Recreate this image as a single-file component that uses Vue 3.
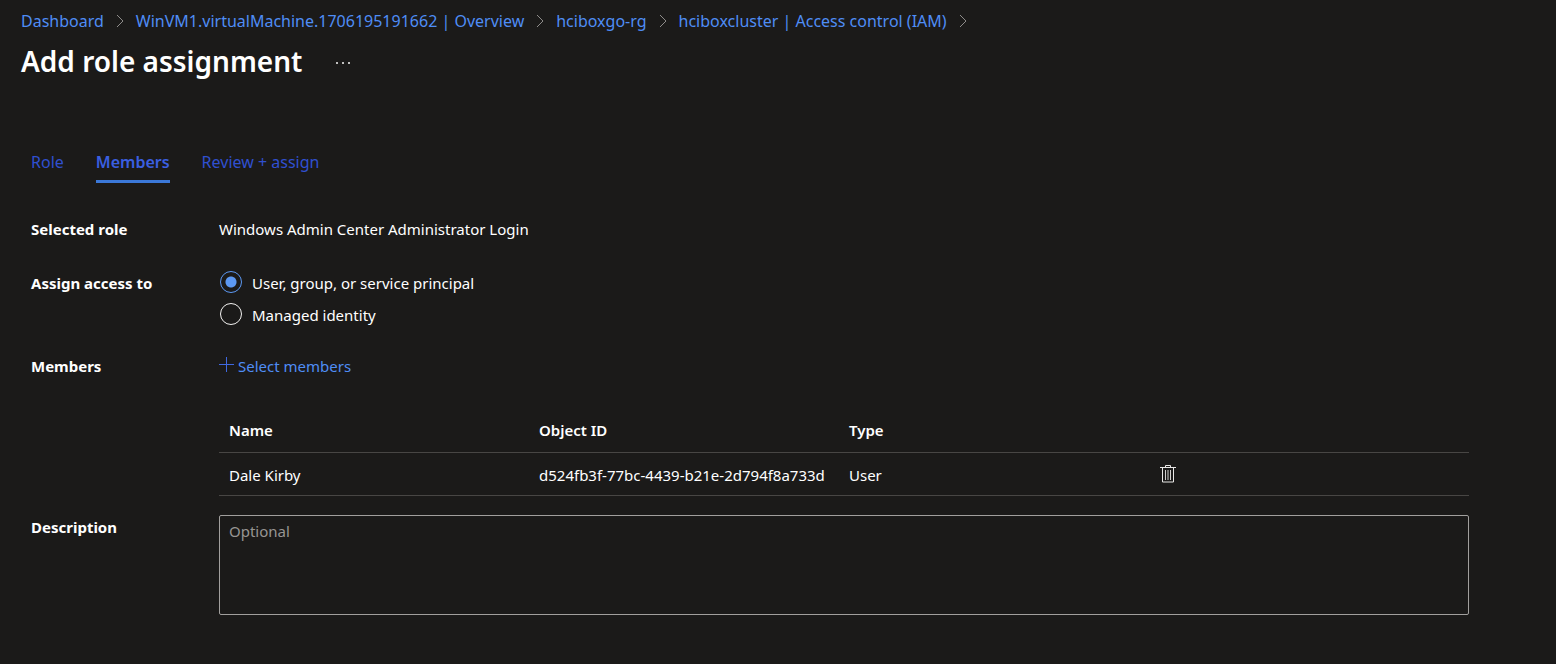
<script setup>
import { ref } from 'vue'

const crumbs = [
  'Dashboard',
  'WinVM1.virtualMachine.1706195191662 | Overview',
  'hciboxgo-rg',
  'hciboxcluster | Access control (IAM)',
]
const tabs = ['Role', 'Members', 'Review + assign']
const activeTab = ref('Members')
const accessOptions = [
  { value: 'principal', label: 'User, group, or service principal' },
  { value: 'managed', label: 'Managed identity' },
]
const access = ref('principal')
const members = ref([
  { name: 'Dale Kirby', id: 'd524fb3f-77bc-4439-b21e-2d794f8a733d', type: 'User' },
])
const description = ref('')

function removeMember(id) {
  members.value = members.value.filter((m) => m.id !== id)
}
</script>

<template>
  <div class="page">
    <nav class="crumbs" aria-label="Breadcrumb">
      <template v-for="crumb in crumbs" :key="crumb">
        <a href="#" class="crumb">{{ crumb }}</a>
        <svg class="chevron" viewBox="0 0 8 14" aria-hidden="true">
          <path d="M1 1l6 6-6 6" />
        </svg>
      </template>
    </nav>

    <header class="heading">
      <h1>Add role assignment</h1>
      <button type="button" class="more" aria-label="More actions">
        <svg viewBox="0 0 14 2" aria-hidden="true">
          <path d="M0 0h2v2H0zM6 0h2v2H6zM12 0h2v2h-2z" />
        </svg>
      </button>
    </header>

    <main>
      <div class="tabs" role="tablist">
        <button
          v-for="tab in tabs"
          :key="tab"
          type="button"
          role="tab"
          class="tab"
          :class="{ active: tab === activeTab }"
          :aria-selected="tab === activeTab"
          @click="activeTab = tab"
        >{{ tab }}</button>
      </div>

      <form class="form" @submit.prevent>
        <div class="row role-row">
          <div class="label">Selected role</div>
          <div class="role-name">Windows Admin Center Administrator Login</div>
        </div>

        <div class="row access-row">
          <div id="access-label" class="label">Assign access to</div>
          <div class="radios" role="radiogroup" aria-labelledby="access-label">
            <label v-for="option in accessOptions" :key="option.value" class="radio">
              <input v-model="access" type="radio" name="access" :value="option.value" />
              <span>{{ option.label }}</span>
            </label>
          </div>
        </div>

        <div class="row members-row">
          <div class="label">Members</div>
          <div class="members">
            <button type="button" class="select">
              <svg viewBox="0 0 15 15" aria-hidden="true"><path d="M7.5 0v15M0 7.5h15" /></svg>
              <span>Select members</span>
            </button>
            <table>
              <thead>
                <tr>
                  <th scope="col">Name</th>
                  <th scope="col">Object ID</th>
                  <th scope="col">Type</th>
                  <th class="actions"></th>
                </tr>
              </thead>
              <tbody>
                <tr v-for="member in members" :key="member.id">
                  <td>{{ member.name }}</td>
                  <td>{{ member.id }}</td>
                  <td>{{ member.type }}</td>
                  <td>
                    <button
                      type="button"
                      class="remove"
                      :aria-label="`Remove ${member.name}`"
                      @click="removeMember(member.id)"
                    >
                      <svg viewBox="0 0 17 19" aria-hidden="true">
                        <path d="M6.5 3V1.5h5V3M1 3.5h16" />
                        <path d="M3.5 4v14h11V4" />
                        <path class="ribs" d="M6.5 6v10M9 6v10M11.5 6v10" />
                      </svg>
                    </button>
                  </td>
                </tr>
              </tbody>
            </table>
          </div>
        </div>

        <div class="row">
          <label class="label" for="description">Description</label>
          <textarea id="description" v-model="description" placeholder="Optional"></textarea>
        </div>
      </form>
    </main>
  </div>
</template>

<style>
body {
  margin: 0;
  background: #1b1a19;
}
</style>

<style scoped>
.page {
  min-height: 100vh;
  box-sizing: border-box;
  padding: 9px 87px 48px 21px;
  background: #1b1a19;
  color: #fff;
  font-family: "Segoe UI", "Noto Sans", "Open Sans", sans-serif;
  font-size: 15px;
  line-height: 24px;
}
button {
  margin: 0;
  padding: 0;
  border: 0;
  background: none;
  color: inherit;
  font: inherit;
  cursor: pointer;
}
svg {
  display: block;
  flex: none;
  fill: none;
}
.crumbs {
  display: flex;
  align-items: center;
  gap: 12px;
  font-size: 16px;
  white-space: nowrap;
}
.crumb {
  color: #4f8df5;
  text-decoration: none;
}
.chevron {
  width: 8px;
  height: 14px;
  stroke: #8e8c8a;
}
.heading {
  display: flex;
  align-items: center;
  gap: 34px;
  margin-top: 8px;
}
h1 {
  margin: 0;
  font-size: 28px;
  line-height: 40px;
  font-weight: 600;
}
.more {
  padding-top: 4px;
}
.more svg {
  width: 14px;
  height: 2px;
  fill: #c0bfbe;
}
main {
  padding-left: 10px;
}
.tabs {
  display: flex;
  gap: 32px;
  margin-top: 69px;
  font-size: 16px;
}
.tab {
  padding-bottom: 6px;
  border-bottom: 3px solid transparent;
  color: #3050d0;
}
.tab.active {
  border-color: #3b78d8;
  color: #3a5fe0;
  font-weight: 600;
}
.row {
  display: grid;
  grid-template-columns: 188px minmax(0, 1fr);
}
.label {
  font-weight: 700;
}
.role-row {
  margin-top: 34px;
}
.access-row {
  margin-top: 30px;
}
.radios {
  display: flex;
  flex-direction: column;
  gap: 8px;
}
.radio {
  display: flex;
  align-items: center;
  gap: 10px;
}
.radio input {
  appearance: none;
  flex: none;
  width: 22px;
  height: 22px;
  margin: 0 0 2px 1px;
  border: 1px solid #f3f2f1;
  border-radius: 50%;
}
.radio input:checked {
  border-color: #5c98f2;
  background: radial-gradient(circle, #5c98f2 5px, transparent 6px);
}
.members-row {
  margin-top: 27px;
}
.select {
  display: flex;
  align-items: center;
  gap: 4px;
  color: #4f8df5;
}
.select svg {
  width: 15px;
  height: 15px;
  margin-bottom: 3px;
  stroke: #3f68e0;
}
table {
  width: 100%;
  margin-top: 30px;
  border-collapse: collapse;
  table-layout: fixed;
}
th,
td {
  box-sizing: border-box;
  width: 24.8%;
  padding: 10px 0 8px 10px;
  border-bottom: 1px solid #484644;
  text-align: left;
  white-space: nowrap;
}
th {
  padding-bottom: 10px;
  font-weight: 600;
}
th.actions {
  width: auto;
}
.remove {
  display: block;
}
.remove svg {
  width: 17px;
  height: 19px;
  margin-bottom: 3px;
  stroke: #e8e7e6;
}
.remove .ribs {
  stroke: #d0cfcd;
}
textarea {
  display: block;
  box-sizing: border-box;
  width: 100%;
  height: 100px;
  margin: 0;
  padding: 3px 9px;
  border: 1px solid #a19f9d;
  border-radius: 2px;
  background: transparent;
  color: inherit;
  font: inherit;
  resize: none;
}
textarea::placeholder {
  color: #979593;
  opacity: 1;
}
.row:last-child {
  margin-top: 19px;
}
</style>
